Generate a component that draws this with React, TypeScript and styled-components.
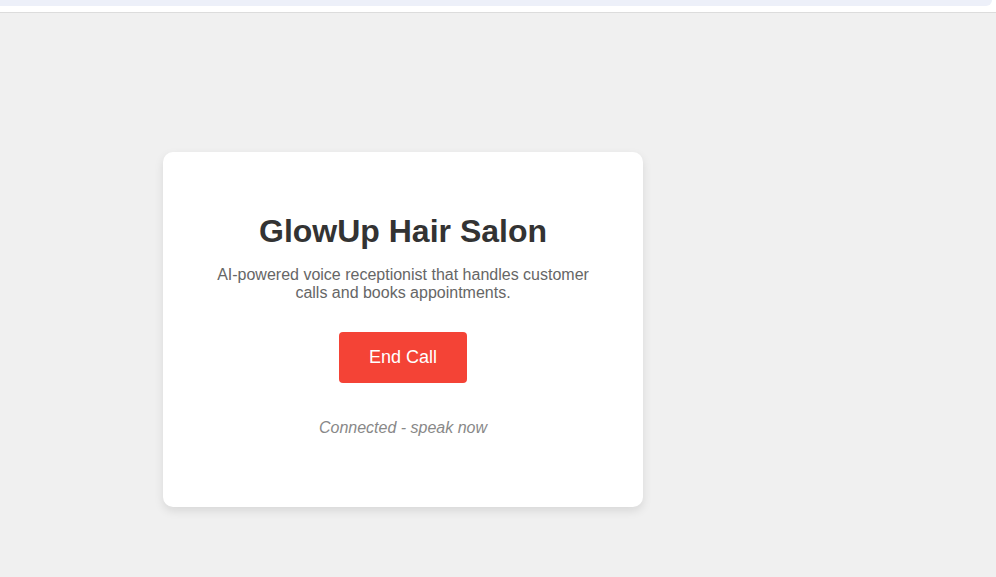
import { styled, createGlobalStyle } from 'styled-components'

const GlobalStyle = createGlobalStyle`
  html, body {
    margin: 0;
    padding: 0;
    background-color: #f0f0f0;
    font-family: "Liberation Sans", Arial, sans-serif;
  }
`

const TopBar = styled.header`
  height: 12px;
  background-color: #fff;
  border-bottom: 1px solid #dcdcdc;
`

const TopStrip = styled.div`
  width: 992px;
  height: 6px;
  background-color: #edf0f9;
  border-bottom-right-radius: 6px;
`

const Page = styled.main`
  display: flex;
  align-items: flex-start;
  padding: 139px 0 0 163px;
  min-height: 564px;
  box-sizing: border-box;
`

const Card = styled.section`
  width: 480px;
  box-sizing: border-box;
  padding: 61px 40px 70px;
  background-color: #fff;
  border-radius: 10px;
  box-shadow: 0 4px 10px rgba(0, 0, 0, 0.1);
  display: flex;
  flex-direction: column;
  align-items: center;
  text-align: center;
`

const Title = styled.h1`
  margin: 0;
  font-size: 32px;
  font-weight: bold;
  color: #333;
`

const Description = styled.p`
  margin: 16px 0 0;
  font-size: 16px;
  color: #666;
`

const EndButton = styled.button`
  margin-top: 30px;
  padding: 15px 30px;
  line-height: 21px;
  border: none;
  border-radius: 4px;
  background-color: #f44336;
  color: #fff;
  font-family: "Liberation Sans", Arial, sans-serif;
  font-size: 18px;
  cursor: pointer;
`

const Status = styled.p`
  margin: 36px 0 0;
  font-size: 16px;
  font-style: italic;
  color: #888;
`

export default function App() {
  return (
    <>
      <GlobalStyle />
      <TopBar>
        <TopStrip />
      </TopBar>
      <Page>
        <Card>
          <Title>GlowUp Hair Salon</Title>
          <Description>
            AI-powered voice receptionist that handles customer calls and books appointments.
          </Description>
          <EndButton>End Call</EndButton>
          <Status>Connected - speak now</Status>
        </Card>
      </Page>
    </>
  )
}
